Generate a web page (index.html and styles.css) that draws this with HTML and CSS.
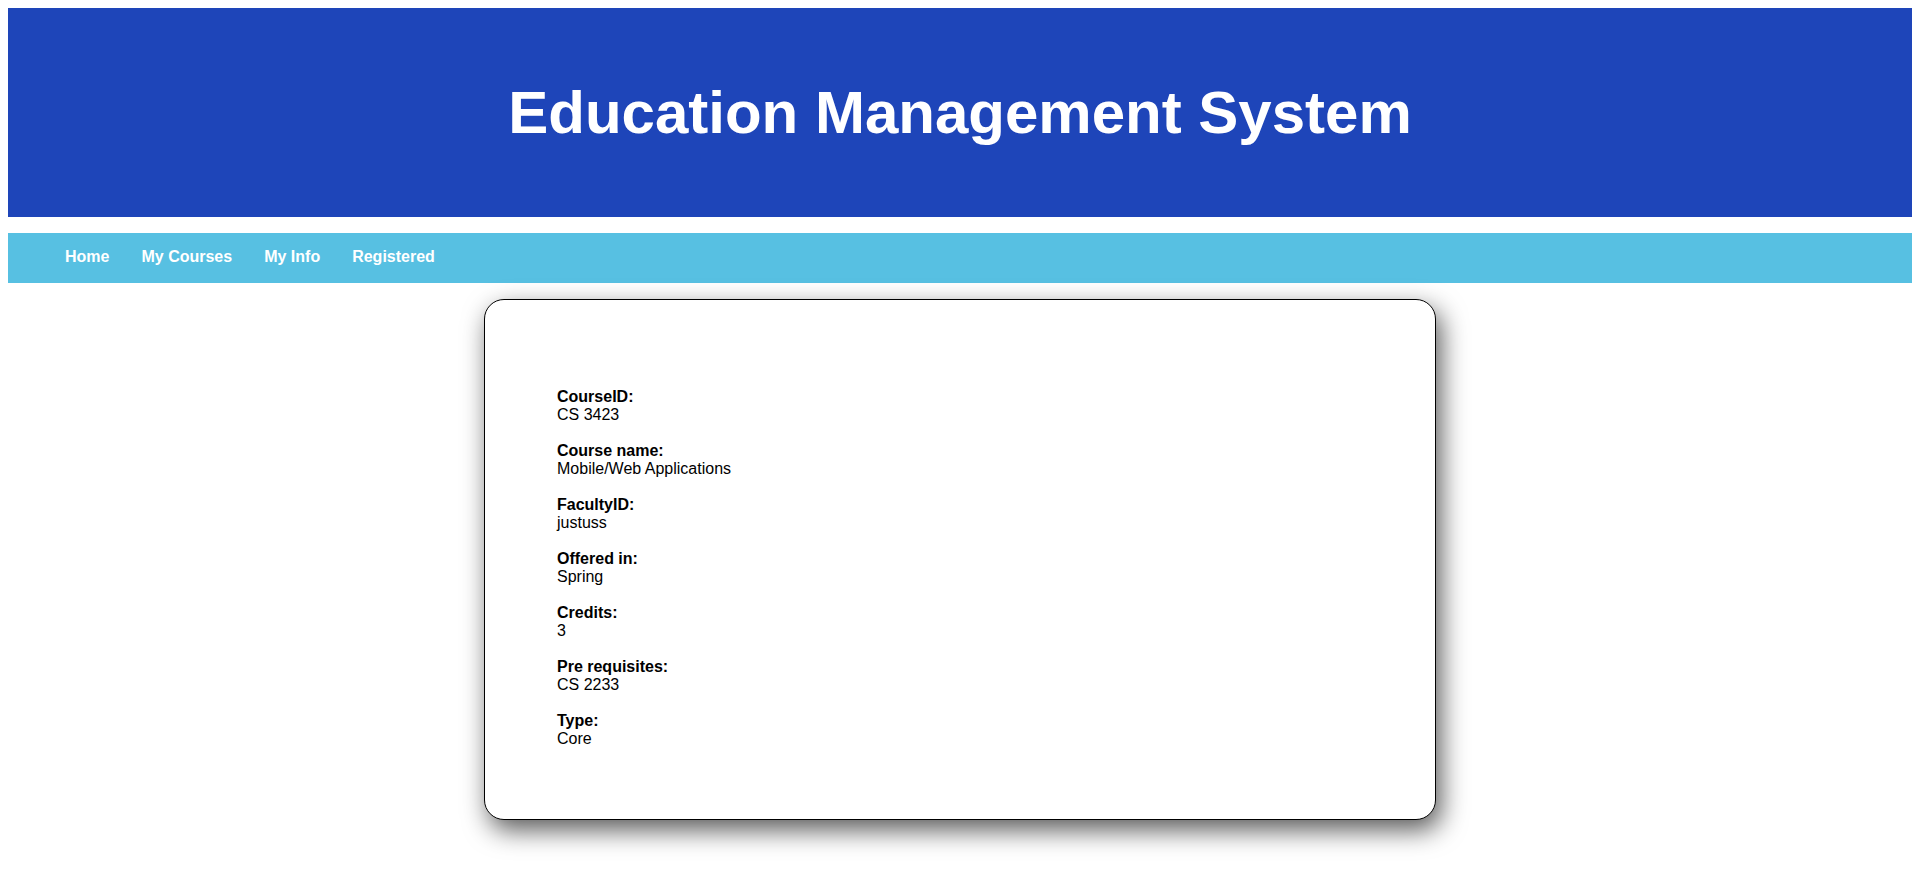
FILE: index.html
```html
<!DOCTYPE html>
<html lang="en">
<head>
<meta charset="utf-8">
<title>Education Management System</title>
<link rel="stylesheet" href="styles.css">
</head>
<body>
<header class="site-header">
  <h1 class="site-title">Education Management System</h1>
</header>
<nav class="main-nav">
  <ul class="nav-list">
    <li><a class="nav-link" href="#">Home</a></li>
    <li><a class="nav-link" href="#">My Courses</a></li>
    <li><a class="nav-link" href="#">My Info</a></li>
    <li><a class="nav-link" href="#">Registered</a></li>
  </ul>
</nav>
<main class="content">
  <section class="card">
    <div class="field"><span class="field-label">CourseID:</span><span class="field-value">CS 3423</span></div>
    <div class="field"><span class="field-label">Course name:</span><span class="field-value">Mobile/Web Applications</span></div>
    <div class="field"><span class="field-label">FacultyID:</span><span class="field-value">justuss</span></div>
    <div class="field"><span class="field-label">Offered in:</span><span class="field-value">Spring</span></div>
    <div class="field"><span class="field-label">Credits:</span><span class="field-value">3</span></div>
    <div class="field"><span class="field-label">Pre requisites:</span><span class="field-value">CS 2233</span></div>
    <div class="field"><span class="field-label">Type:</span><span class="field-value">Core</span></div>
  </section>
</main>
</body>
</html>
```
FILE: styles.css
```css
html, body {
  margin: 0;
  padding: 0;
}
body {
  margin: 8px;
  font-family: "Liberation Sans", Arial, sans-serif;
  font-size: 16px;
  color: #000;
  background: #fff;
}
.site-header {
  height: 209px;
  background: #1e45b9;
  display: flex;
  align-items: center;
  justify-content: center;
}
.site-title {
  margin: 0;
  font-size: 60px;
  font-weight: bold;
  color: #fff;
  line-height: 69px;
}
.main-nav {
  margin-top: 16px;
  background: #57c0e2;
}
.nav-list {
  list-style: none;
  margin: 0;
  padding: 15px 0 17px 41px;
  display: flex;
}
.nav-link {
  display: block;
  padding: 0 16px;
  line-height: 18px;
  color: #fff;
  font-weight: bold;
  text-decoration: none;
}
.content {
  padding: 16px 0 50px;
  display: flex;
  justify-content: center;
}
.card {
  box-sizing: border-box;
  width: 952px;
  border: 1px solid #000;
  border-radius: 20px;
  background: #fff;
  box-shadow: 5px 10px 26px rgba(0, 0, 0, 0.65);
  padding: 88px 72px 53px;
}
.field {
  display: flex;
  flex-direction: column;
  line-height: 18px;
  margin-bottom: 18px;
}
.field-label {
  font-weight: bold;
}
```
